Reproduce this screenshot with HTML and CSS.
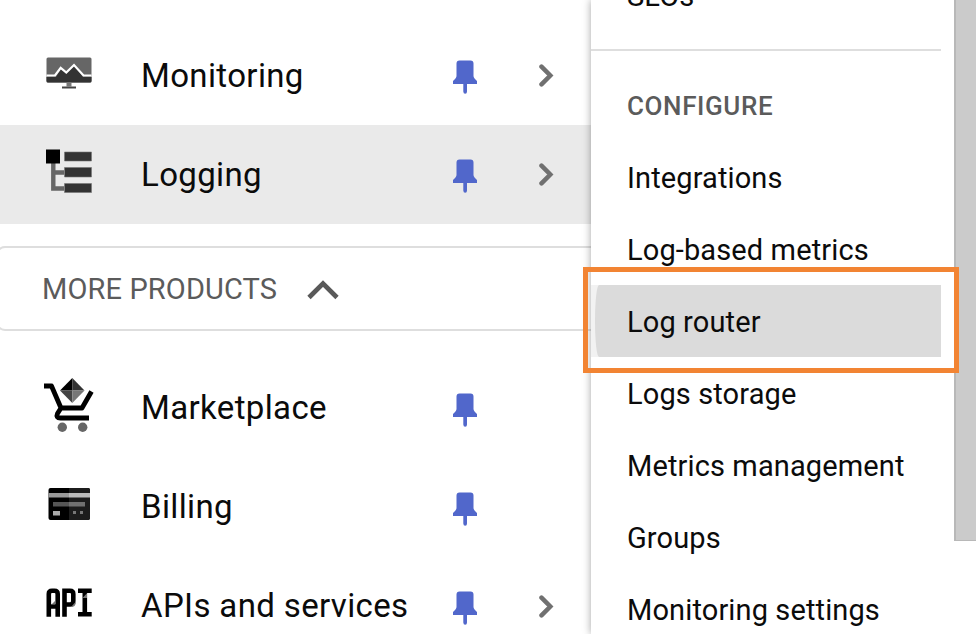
FILE: index.html
```
<!DOCTYPE html>
<html lang="en">
<head>
<meta charset="utf-8">
<title>Navigation</title>
<link rel="stylesheet" href="styles.css">
</head>
<body>
<svg class="defs" width="0" height="0" aria-hidden="true">
  <symbol id="pin" viewBox="0 0 24 34"><path d="M6.500.5H17.500Q20.500.5 20.500 3.500V16Q20.500 18 24 21V24H14V31.500Q14 33.700 12.200 33.700T10.300 31.500V24H0V21Q3.500 18 3.500 16V3.500Q3.500.5 6.500.5Z" fill="#5167cb"/></symbol>
  <symbol id="next" viewBox="0 0 16 24"><path d="M3.500 2.700L12.300 11.500 3.500 20.300" fill="none" stroke="#707070" stroke-width="4.500" stroke-linecap="round"/></symbol>
</svg>
<div class="screen">
  <nav class="products">
    <a class="row">
      <svg class="icon" viewBox="0 0 56 56">
        <rect x="4.500" y="9.500" width="45" height="25" rx="1.500" fill="#666"/>
        <path d="M4.500 29H14L19 21 24 25 32 17 41 29H49.500V33Q49.500 34.500 48 34.500H6Q4.500 34.500 4.500 33Z" fill="#333"/>
        <path d="M4.500 27.500H13L18.700 19.800 24.300 24.500 32 17 41.500 27.500H49.500" fill="none" stroke="#fff" stroke-width="2.200"/>
        <path d="M24.500 34.500H29.500V38.500H24.500Z" fill="#777"/><path d="M20 38.500H34V40.500H20Z" fill="#444"/>
      </svg>
      <span class="label">Monitoring</span><svg class="pin"><use href="#pin"/></svg><svg class="next"><use href="#next"/></svg>
    </a>
    <a class="row active">
      <svg class="icon" viewBox="0 0 56 56">
        <path d="M11.300 14V41.500H22M11.300 25.500H22" fill="none" stroke="#666" stroke-width="4.400"/>
        <path d="M4 2.500H18V16.500H4Z" fill="#000"/>
        <path d="M22.500 5H49.500V14H22.500ZM22.500 20.500H49.500V30H22.500ZM22.500 36.500H49.500V45.500H22.500Z" fill="#333" stroke="#777" stroke-width=".6"/>
      </svg>
      <span class="label">Logging</span><svg class="pin"><use href="#pin"/></svg><svg class="next"><use href="#next"/></svg>
    </a>
    <div class="more"><span>MORE PRODUCTS</span><svg viewBox="0 0 34 24"><path d="M3 20.500L17 6.500 31 20.500" fill="none" stroke="#595959" stroke-width="4.700"/></svg></div>
    <a class="row lower">
      <svg class="icon" viewBox="0 -7 56 56">
        <path d="M2 -1H9.500L19 21H40L49.500 4.500M19 21L15.500 26.500Q13.500 31 18.500 31H47" fill="none" stroke="#000" stroke-width="4.800" stroke-linejoin="round"/>
        <path d="M30.300-9V3.500H18Z" fill="#000"/><path d="M30.300-9L42.500 3.500H30.300Z" fill="#333"/><path d="M18 3.500H30.300V16Z" fill="#444"/><path d="M42.500 3.500H30.300V16Z" fill="#777"/>
        <circle cx="20.300" cy="40.300" r="4.700" fill="#666"/><circle cx="40.700" cy="40.300" r="4.700" fill="#666"/>
      </svg>
      <span class="label">Marketplace</span><svg class="pin"><use href="#pin"/></svg>
    </a>
    <a class="row lower">
      <svg class="icon" viewBox="0 0 56 56">
        <rect x="6.500" y="9" width="41.500" height="32" rx="2" fill="#000"/>
        <path d="M27 9H46Q48 9 48 11V39Q48 41 46 41H27Z" fill="#1c1c1c"/>
        <path d="M6.500 14H27V18.500H6.500Z" fill="#999"/><path d="M27 14H48V18.500H27Z" fill="#bbb"/>
        <path d="M11 23H27V27.500H11Z" fill="#555"/><path d="M27 23H43V27.500H27Z" fill="#707070"/>
        <path d="M11 32H18V36.500H11Z" fill="#aaa"/><path d="M31 32H34V35H31ZM38 32H41V35H38Z" fill="#777"/>
      </svg>
      <span class="label">Billing</span><svg class="pin"><use href="#pin"/></svg>
    </a>
    <a class="row lower">
      <svg class="icon" viewBox="0 0 56 56">
        <g fill="none" stroke="#000" stroke-width="4.600"><path d="M6.800 38.700V16Q6.800 12.800 10 12.800H12.500Q15.700 12.800 15.700 16V38.700M6.800 28.500H15.700M22.500 38.700V12.800H28Q31.300 12.800 31.300 16V23Q31.300 26.500 28 26.500H22.500M36 12.800H49.700M36 36.300H49.700M42.800 12.800V36.300"/></g>
        <path d="M9 27L13 23V26.200H9ZM29 29L33.500 24V26Q33 29 29 29ZM40.500 20L45 15.200V20Z" fill="#777"/>
      </svg>
      <span class="label">APIs and services</span><svg class="pin"><use href="#pin"/></svg><svg class="next"><use href="#next"/></svg>
    </a>
  </nav>
  <section class="submenu">
    <a class="item slos">SLOs</a>
    <hr>
    <h2>CONFIGURE</h2>
    <a class="item">Integrations</a>
    <a class="item">Log-based metrics</a>
    <a class="item selected"><span>Log router</span></a>
    <a class="item">Logs storage</a>
    <a class="item">Metrics management</a>
    <a class="item">Groups</a>
    <a class="item">Monitoring settings</a>
  </section>
  <div class="gutter"></div>
  <div class="highlight"></div>
</div>
</body>
</html>
```
FILE: styles.css
```
* { box-sizing: border-box; }
body { margin: 0; background: #fff; font-family: Roboto, sans-serif; color: #0b0b0b; overflow: hidden; }
.defs { position: absolute; }
.screen { position: relative; display: flex; width: 976px; height: 634px; overflow: hidden; }
.products { flex: 0 0 591px; padding-top: 26px; }
.row { display: flex; align-items: center; height: 99px; padding-left: 42px; }
.row.active { background: #eaeaea; }
.icon { flex: none; width: 56px; height: 56px; margin-right: 43px; overflow: visible; }
.label { width: 312px; font-size: 33px; line-height: 40px; letter-spacing: .36px; white-space: nowrap; }
.pin { flex: none; width: 24px; height: 34px; margin-top: 2px; }
.lower .pin { margin-top: 4px; }
.next { flex: none; width: 16px; height: 24px; margin-left: 61px; }
.lower .next { margin-top: 2px; }
.more { display: flex; align-items: center; gap: 29px; height: 85px; margin: 22px 0 27px -4px; padding-left: 44px; border: 2px solid #dedede; border-right: 0; border-radius: 9px 0 0 9px; color: #5b5b5b; font-size: 29px; letter-spacing: .12px; }
.more svg { width: 34px; height: 24px; }
.submenu { flex: 0 0 363px; padding-right: 13px; background: #fff; box-shadow: 0 0 8px rgba(0,0,0,.36); clip-path: inset(0 0 0 -12px); }
.item { display: flex; align-items: center; height: 72px; padding: 2px 0 0 36px; font-size: 29px; letter-spacing: .12px; white-space: nowrap; }
.item.slos { margin-top: -41px; margin-bottom: 18px; }
.submenu hr { height: 2px; margin: 0; border: 0; background: #dedede; }
.submenu h2 { display: flex; align-items: center; height: 90px; margin: 0; padding: 19px 0 0 36px; font-size: 26px; font-weight: 500; letter-spacing: .6px; color: #5b5b5b; }
.item.selected { padding: 0 0 0 4px; background: #f2f2f2; }
.item.selected span { display: flex; align-items: center; flex: 1; height: 100%; padding: 2px 0 0 32px; background: #dbdbdb; border-radius: 4px 0 0 4px / 36px 0 0 36px; }
.gutter { flex: 1; height: 541px; background: #cbcbcb; border-left: 2px solid #b8b8b8; border-bottom: 1px solid #b8b8b8; }
.highlight { position: absolute; left: 583px; top: 267px; width: 376px; height: 106px; border: 5px solid #f28433; }
```
